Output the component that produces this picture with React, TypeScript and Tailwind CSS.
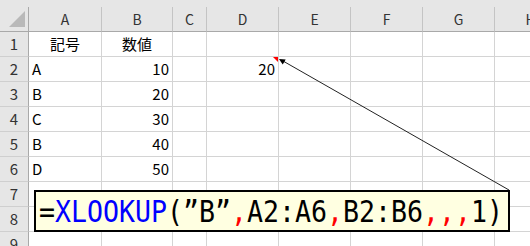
const colNames = ['A', 'B', 'C', 'D', 'E', 'F', 'G', 'H']

// cell contents keyed by "<col><row>"
const cells: Record<string, { text: string; align: 'left' | 'center' | 'right' }> = {
  A1: { text: '記号', align: 'center' },
  B1: { text: '数値', align: 'center' },
  A2: { text: 'A', align: 'left' },
  A3: { text: 'B', align: 'left' },
  A4: { text: 'C', align: 'left' },
  A5: { text: 'B', align: 'left' },
  A6: { text: 'D', align: 'left' },
  B2: { text: '10', align: 'right' },
  B3: { text: '20', align: 'right' },
  B4: { text: '30', align: 'right' },
  B5: { text: '40', align: 'right' },
  B6: { text: '50', align: 'right' },
  D2: { text: '20', align: 'right' },
}

const alignClass = {
  left: 'justify-start pl-[3px]',
  center: 'justify-center',
  right: 'justify-end pr-[3px]',
}

const rows = [1, 2, 3, 4, 5, 6, 7, 8, 9]

// formula pieces: black text, blue function name, red separators
const formula: { t: string; c: string }[] = [
  { t: '=', c: 'text-black' },
  { t: 'XLOOKUP', c: 'text-[#0000ff]' },
  { t: '(”B”', c: 'text-black' },
  { t: ',', c: 'text-[#ff0000]' },
  { t: 'A2:A6', c: 'text-black' },
  { t: ',', c: 'text-[#ff0000]' },
  { t: 'B2:B6', c: 'text-black' },
  { t: ',,,', c: 'text-[#ff0000]' },
  { t: '1)', c: 'text-black' },
]

export default function App() {
  return (
    <div className="relative w-[530px] h-[246px] overflow-hidden bg-white font-['Noto_Sans_CJK_JP',sans-serif]">
      {/* strip above column headers */}
      <div className="h-[7px] bg-[#e6e6e6]" />

      <div className="grid grid-cols-[29px_73px_71px_34px_72px_72px_72px_72px_72px]">
        {/* select-all corner */}
        <div className="h-[25px] bg-[#e6e6e6] border-r border-b border-[#a9a9a9]">
          <svg width="28" height="24" className="block">
            <polygon points="25,4 25,20 9,20" fill="#b9b9b9" />
          </svg>
        </div>
        {colNames.map((c) => (
          <div
            key={c}
            className="h-[25px] flex items-center justify-center bg-[#e6e6e6] border-r border-r-[#c4c4c4] border-b border-b-[#a9a9a9] text-[14px] text-[#333]"
          >
            {c}
          </div>
        ))}

        {rows.map((r) => (
          <div key={r} className="contents">
            <div className="h-[25px] flex items-center justify-center bg-[#e6e6e6] border-r border-r-[#a9a9a9] border-b border-b-[#cfcfcf] text-[15px] leading-[24px] text-[#333]">
              {r}
            </div>
            {colNames.map((c) => {
              const cell = cells[`${c}${r}`]
              return (
                <div
                  key={c}
                  className={`relative h-[25px] flex border-r border-b border-[#d4d4d4] text-[15px] leading-[24px] text-black ${
                    cell ? alignClass[cell.align] : ''
                  }`}
                >
                  {cell?.text}
                  {c === 'D' && r === 2 && (
                    <span className="absolute top-0 right-0 w-0 h-0 border-t-[5px] border-t-[#ff0000] border-l-[5px] border-l-transparent" />
                  )}
                </div>
              )
            })}
          </div>
        ))}
      </div>

      {/* callout arrow pointing at D2 */}
      <svg className="absolute inset-0 pointer-events-none" width="530" height="246">
        <line x1="509" y1="190" x2="283" y2="61" stroke="#222" strokeWidth="1" />
        <polygon points="279,59 285.7,59.4 282.7,64.6" fill="#000" />
      </svg>

      {/* formula callout */}
      <div className="absolute left-[34px] top-[190px] w-[476px] h-[42px] border-2 border-black bg-[#ffffe1] overflow-hidden">
        <div className="pl-[3px] pt-[4px]">
          <div className="inline-block origin-left scale-x-[0.857] whitespace-nowrap font-['DejaVu_Sans_Mono',monospace] text-[31px] leading-[31px]">
            {formula.map((p, i) => (
              <span key={i} className={p.c}>
                {p.t}
              </span>
            ))}
          </div>
        </div>
      </div>
    </div>
  )
}
